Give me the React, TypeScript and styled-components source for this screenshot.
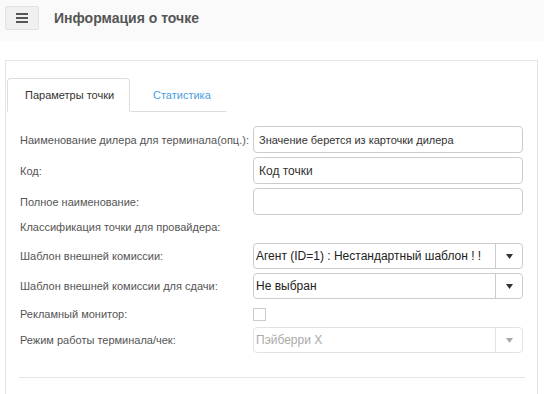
import styled, { createGlobalStyle } from "styled-components"

const GlobalStyle = createGlobalStyle`
    body {
        margin: 0;
        background: #fff;
        font-family: "Liberation Sans", Arial, sans-serif;
        color: #333;
    }
`

const Header = styled.div`
    height: 41px;
    background: #fafafa;
    display: flex;
    align-items: center;
    padding: 0 5px;
`

const MenuButton = styled.button`
    width: 34px;
    height: 24px;
    margin-top: -6px;
    background: #f0f0f0;
    border: 1px solid #e2e2e2;
    border-radius: 2px;
    display: flex;
    align-items: center;
    justify-content: center;
    padding: 0;
`

const Title = styled.h1`
    margin: -6px 0 0 15px;
    font-size: 14px;
    font-weight: bold;
    color: #555;
`

const Panel = styled.div`
    margin: 19px 0 0 5px;
    width: 533px;
    height: 340px;
    box-sizing: border-box;
    border: 1px solid #e4e4e4;
    border-bottom: none;
    padding: 17px 13px 0 1px;
`

const TabList = styled.div`
    display: inline-flex;
    border-bottom: 1px solid #ddd;
`

const Tab = styled.div<{ $active?: boolean }>`
    height: 34px;
    width: ${p => (p.$active ? "123px" : "97px")};
    padding-left: ${p => (p.$active ? "17px" : "22px")};
    display: flex;
    align-items: center;
    font-size: 11px;
    box-sizing: border-box;
    margin-bottom: -1px;
    color: ${p => (p.$active ? "#333" : "#4a9ee0")};
    border: 1px solid ${p => (p.$active ? "#ddd" : "transparent")};
    border-bottom-color: ${p => (p.$active ? "#fff" : "#ddd")};
    border-radius: 4px 4px 0 0;
    background: #fff;
`

const Form = styled.div`
    padding: 14px 0 0 13px;
`

const Row = styled.div<{ $h: number; $mb: number }>`
    display: flex;
    align-items: center;
    height: ${p => p.$h}px;
    margin-bottom: ${p => p.$mb}px;
`

const Label = styled.div`
    width: 233px;
    flex-shrink: 0;
    font-size: 11px;
    color: #555;
`

const Input = styled.div<{ $placeholder?: boolean }>`
    width: 270px;
    height: 100%;
    box-sizing: border-box;
    border: 1px solid #ccc;
    border-radius: 4px;
    padding: 0 5px;
    display: flex;
    align-items: center;
    font-size: ${p => (p.$placeholder ? "11px" : "12px")};
    color: #333;
`

const Select = styled.div<{ $disabled?: boolean }>`
    width: 270px;
    height: 100%;
    box-sizing: border-box;
    border: 1px solid ${p => (p.$disabled ? "#e3e3e3" : "#ccc")};
    border-radius: 4px;
    display: flex;
    font-size: 12px;
    color: ${p => (p.$disabled ? "#aaa" : "#222")};
`

const SelectValue = styled.div`
    flex: 1;
    display: flex;
    align-items: center;
    padding-left: 2px;
    white-space: nowrap;
    overflow: hidden;
`

const SelectArrow = styled.div<{ $disabled?: boolean }>`
    width: 26px;
    border-left: 1px solid ${p => (p.$disabled ? "#e3e3e3" : "#ccc")};
    display: flex;
    align-items: center;
    justify-content: center;
    color: ${p => (p.$disabled ? "#aaa" : "#333")};
`

const Checkbox = styled.div`
    width: 11px;
    height: 11px;
    border: 1px solid #ccc;
`

const Divider = styled.hr`
    margin: 24px 0 0 -1px;
    width: 506px;
    border: none;
    border-top: 1px solid #e5e5e5;
`

const Arrow = () => (
    <svg width="7" height="5" viewBox="0 0 7 5">
        <path d="M0 0h7L3.5 5z" fill="currentColor" />
    </svg>
)

const App = () => {
    return (
        <>
            <GlobalStyle />
            <Header>
                <MenuButton>
                    <svg width="12" height="10" viewBox="0 0 12 10">
                        <rect y="0" width="12" height="2" fill="#555" />
                        <rect y="4" width="12" height="2" fill="#555" />
                        <rect y="8" width="12" height="2" fill="#555" />
                    </svg>
                </MenuButton>
                <Title>Информация о точке</Title>
            </Header>
            <Panel>
                <TabList>
                    <Tab $active>Параметры точки</Tab>
                    <Tab>Статистика</Tab>
                </TabList>
                <Form>
                    <Row $h={27} $mb={4}>
                        <Label>Наименование дилера для терминала(опц.):</Label>
                        <Input $placeholder>Значение берется из карточки дилера</Input>
                    </Row>
                    <Row $h={27} $mb={4}>
                        <Label>Код:</Label>
                        <Input>Код точки</Input>
                    </Row>
                    <Row $h={27} $mb={4}>
                        <Label>Полное наименование:</Label>
                        <Input />
                    </Row>
                    <Row $h={16} $mb={8}>
                        <Label>Классификация точки для провайдера:</Label>
                    </Row>
                    <Row $h={26} $mb={4}>
                        <Label>Шаблон внешней комиссии:</Label>
                        <Select>
                            <SelectValue>Агент (ID=1) : Нестандартный шаблон ! !</SelectValue>
                            <SelectArrow><Arrow /></SelectArrow>
                        </Select>
                    </Row>
                    <Row $h={26} $mb={4}>
                        <Label>Шаблон внешней комиссии для сдачи:</Label>
                        <Select>
                            <SelectValue>Не выбран</SelectValue>
                            <SelectArrow><Arrow /></SelectArrow>
                        </Select>
                    </Row>
                    <Row $h={22} $mb={2}>
                        <Label>Рекламный монитор:</Label>
                        <Checkbox />
                    </Row>
                    <Row $h={26} $mb={0}>
                        <Label>Режим работы терминала/чек:</Label>
                        <Select $disabled>
                            <SelectValue>Пэйберри X</SelectValue>
                            <SelectArrow $disabled><Arrow /></SelectArrow>
                        </Select>
                    </Row>
                    <Divider />
                </Form>
            </Panel>
        </>
    )
}

export default App
